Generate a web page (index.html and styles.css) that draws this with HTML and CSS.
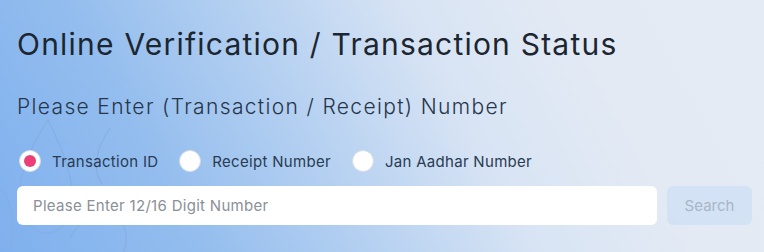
FILE: index.html
```html
<!DOCTYPE html>
<html lang="en">
<head>
<meta charset="utf-8">
<title>Online Verification</title>
<link rel="stylesheet" href="styles.css">
</head>
<body>
<main class="panel">
  <h1 class="title">Online Verification / Transaction Status</h1>
  <h2 class="subtitle">Please Enter (Transaction / Receipt) Number</h2>
  <form class="form">
    <div class="radios">
      <label class="radio"><input type="radio" name="kind" checked><span class="dot"></span><span class="lbl">Transaction ID</span></label>
      <label class="radio"><input type="radio" name="kind"><span class="dot"></span><span class="lbl">Receipt Number</span></label>
      <label class="radio"><input type="radio" name="kind"><span class="dot"></span><span class="lbl">Jan Aadhar Number</span></label>
    </div>
    <div class="row">
      <input class="field" type="text" placeholder="Please Enter 12/16 Digit Number">
      <button class="btn" type="button">Search</button>
    </div>
  </form>
</main>
</body>
</html>
```
FILE: styles.css
```css
html, body {
  margin: 0;
  height: 100%;
}
body {
  font-family: "Inter", "Open Sans", sans-serif;
  background-color: #c4d9f1;
  background-image:
    url("data:image/svg+xml;utf8,<svg xmlns='http://www.w3.org/2000/svg' width='200' height='140' viewBox='0 0 200 140'><g fill='none' stroke='%2385ade0' stroke-width='1.3' opacity='0.75'><path d='M48 2 C30 30 14 60 22 92 C28 116 52 124 66 104 C80 82 70 46 48 2 Z'/><path d='M110 10 C96 30 92 52 102 66'/><path d='M70 120 C80 100 100 92 116 100 C130 108 128 130 120 140'/><path d='M0 70 C12 82 16 104 10 130'/></g></svg>"),
    linear-gradient(62deg, #7fb0ee 0%, #93bdee 22%, #b6d1f1 42%, #d8e4f4 60%, #e3eaf4 78%, #e4ebf4 100%);
  background-repeat: no-repeat, no-repeat;
  background-position: 0 118px, 0 0;
}
.panel {
  padding: 24px 12px 0 17px;
}
.title {
  margin: 0;
  font-size: 30px;
  font-weight: 400;
  color: #1c2630;
  letter-spacing: 1.22px;
  line-height: 40px;
}
.subtitle {
  margin: 28px 0 0 0;
  font-size: 21px;
  font-weight: 300;
  color: #26364a;
  letter-spacing: 1.35px;
  line-height: 29px;
}
.form {
  margin-top: 27px;
}
.radios {
  display: flex;
  align-items: center;
  height: 26px;
  padding-left: 2px;
}
.radio {
  display: flex;
  align-items: center;
  margin-right: 21px;
}
.radio input {
  display: none;
}
.dot {
  width: 20px;
  height: 20px;
  border-radius: 50%;
  background: #ffffff;
  border: 1px solid #d6dde6;
  box-sizing: content-box;
  display: flex;
  align-items: center;
  justify-content: center;
}
.radio input:checked + .dot::after {
  content: "";
  width: 12px;
  height: 12px;
  border-radius: 50%;
  background: #ec3f76;
}
.lbl {
  margin-left: 11px;
  font-size: 15px;
  font-weight: 400;
  color: #2a3b52;
  letter-spacing: 0.3px;
}
.row {
  display: flex;
  gap: 10px;
  margin-top: 12px;
}
.field {
  width: 640px;
  height: 39px;
  box-sizing: border-box;
  border: none;
  border-radius: 6px;
  background: #ffffff;
  padding: 0 16px;
  font-family: inherit;
  font-size: 15px;
  letter-spacing: 0.3px;
  color: #333;
  outline: none;
}
.field::placeholder {
  color: #8a9097;
}
.btn {
  width: 85px;
  height: 39px;
  border: none;
  border-radius: 6px;
  background: rgba(200, 220, 245, 0.6);
  color: #a8b6c6;
  font-family: inherit;
  font-size: 15px;
}
```
